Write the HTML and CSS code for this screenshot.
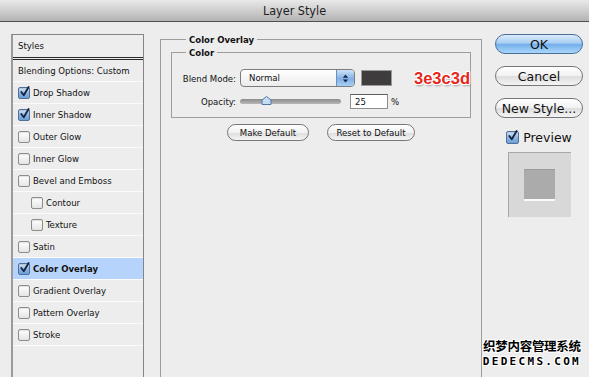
FILE: index.html
```html
<!DOCTYPE html>
<html lang="en">
<head>
  <meta charset="UTF-8" />
  <title>Layer Style</title>
  <link rel="stylesheet" href="styles.css">
</head>
<body>
  <div class="titlebar">Layer Style</div>

  <div class="dialog">
    <div class="styles-list">
      <div class="list-head">Styles</div>
      <div class="row row-blend">Blending Options: Custom</div>
      <div class="row"><span class="cb checked"><svg viewBox="0 0 12 12"><path d="M2.5 6 L5.2 9.6 L10.5 0.5"/></svg></span>Drop Shadow</div>
      <div class="row"><span class="cb checked"><svg viewBox="0 0 12 12"><path d="M2.5 6 L5.2 9.6 L10.5 0.5"/></svg></span>Inner Shadow</div>
      <div class="row"><span class="cb"></span>Outer Glow</div>
      <div class="row"><span class="cb"></span>Inner Glow</div>
      <div class="row"><span class="cb"></span>Bevel and Emboss</div>
      <div class="row sub"><span class="cb"></span>Contour</div>
      <div class="row sub"><span class="cb"></span>Texture</div>
      <div class="row"><span class="cb"></span>Satin</div>
      <div class="row selected"><span class="cb checked"><svg viewBox="0 0 12 12"><path d="M2.5 6 L5.2 9.6 L10.5 0.5"/></svg></span>Color Overlay</div>
      <div class="row"><span class="cb"></span>Gradient Overlay</div>
      <div class="row"><span class="cb"></span>Pattern Overlay</div>
      <div class="row"><span class="cb"></span>Stroke</div>
    </div>

    <div class="settings">
      <fieldset class="group outer">
        <legend>Color Overlay</legend>
        <fieldset class="group inner">
          <legend>Color</legend>
          <div class="field">
            <span class="label">Blend Mode:</span>
            <div class="select">
              <span class="select-value">Normal</span>
              <span class="select-arrows">
                <svg viewBox="0 0 8 12"><path d="M4 1.5 L7 5 H1 Z M4 10.5 L7 7 H1 Z"/></svg>
              </span>
            </div>
            <span class="swatch"></span>
            <span class="note">3e3c3d</span>
          </div>
          <div class="field">
            <span class="label">Opacity:</span>
            <div class="slider">
              <span class="track"></span>
              <svg class="thumb" viewBox="0 0 11 10"><path d="M1 9 V4.5 L5.5 1 L10 4.5 V9 Z"/></svg>
            </div>
            <span class="num">25</span>
            <span class="unit">%</span>
          </div>
        </fieldset>
        <div class="defaults">
          <span class="btn btn-make">Make Default</span>
          <span class="btn btn-reset">Reset to Default</span>
        </div>
      </fieldset>
    </div>

    <div class="actions">
      <span class="btn big primary">OK</span>
      <span class="btn big">Cancel</span>
      <span class="btn big">New Style...</span>
      <div class="preview-check"><span class="cb checked"><svg viewBox="0 0 12 12"><path d="M2.5 6 L5.2 9.6 L10.5 0.5"/></svg></span>Preview</div>
      <div class="preview-box"><span class="preview-square"></span></div>
    </div>
  </div>

  <div class="watermark">
    <div class="wm-cn">织梦内容管理系统</div>
    <div class="wm-en">DEDECMS.COM</div>
  </div>
</body>
</html>
```

FILE: styles.css
```css
html, body {
  margin: 0;
  padding: 0;
  height: 100%;
  overflow: hidden;
  background: #ededed;
  color: #111;
  font-family: "DejaVu Sans Condensed", "DejaVu Sans", sans-serif;
  font-size: 9.5px;
}
.titlebar {
  height: 21px;
  line-height: 22px;
  text-align: center;
  font-size: 12.5px;
  color: #1e1e1e;
  background: linear-gradient(#e9e9e9, #c9c9c9 60%, #b3b3b3);
  border-bottom: 1px solid #505050;
}
.dialog {
  display: flex;
  align-items: flex-start;
  padding-top: 12px;
}

/* left list */
.styles-list {
  margin-left: 11px;
  width: 130px;
  height: 360px;
  border: 1px solid #858585;
  border-left-width: 2px;
  border-left-color: #9a9a9a;
}
.list-head {
  height: 22px;
  line-height: 22px;
  padding-left: 5px;
  border-bottom: 3px double #2a2a2a;
}
.row {
  display: flex;
  align-items: center;
  gap: 3px;
  height: 21px;
  padding-left: 5px;
  border-bottom: 1px solid #fbfbfb;
}
.row-blend {
  padding-left: 5px;
}
.row.sub {
  padding-left: 18px;
}
.row.selected {
  background: #b6d4fb;
  font-weight: bold;
}
.cb {
  position: relative;
  box-sizing: border-box;
  width: 12px;
  height: 12px;
  flex: none;
  border: 1px solid #8d8d8d;
  border-radius: 2px;
  background: linear-gradient(#ffffff, #e4e4e4);
  box-shadow: inset 0 1px 1px rgba(0, 0, 0, 0.12);
}
.cb.checked {
  border-color: #4f6f98;
  background: linear-gradient(#d3e5f8, #8ab4e3 55%, #6c9fd8);
}
.cb svg {
  position: absolute;
  left: 0;
  top: -2px;
  width: 11px;
  height: 12px;
  overflow: visible;
}
.cb path {
  fill: none;
  stroke: #17233e;
  stroke-width: 2;
  stroke-linecap: round;
  stroke-linejoin: round;
}

/* middle settings */
.settings {
  margin-left: 16px;
  width: 314px;
}
.group {
  margin: 0;
  border: 1px solid #9d9d9d;
}
.group legend {
  font-weight: bold;
  padding: 0 3px;
  line-height: 11px;
}
.outer {
  height: 360px;
  padding: 2px 10px 0;
}
.outer > legend {
  margin-left: 15px;
}
.inner {
  padding: 11px 0 7px 2px;
}
.inner > legend {
  margin-left: 12px;
}
.field {
  display: flex;
  align-items: center;
  height: 18px;
}
.field + .field {
  margin-top: 5px;
}
.label {
  width: 62px;
  margin-right: 4px;
  text-align: right;
}
.select {
  display: flex;
  box-sizing: border-box;
  width: 115px;
  height: 18px;
  border: 1px solid #7c7c7c;
  border-radius: 4px;
  background: linear-gradient(#ffffff, #ececec);
  overflow: hidden;
}
.select-value {
  flex: 1;
  line-height: 16px;
  padding-left: 8px;
}
.select-arrows {
  display: flex;
  align-items: center;
  justify-content: center;
  width: 17px;
  border-left: 1px solid #6f8fb8;
  background: linear-gradient(#cfe3f8, #7fb0e6 55%, #a9cff5);
}
.select-arrows svg {
  width: 7px;
  height: 11px;
}
.select-arrows path {
  fill: #1b2540;
}
.swatch {
  width: 31px;
  height: 16px;
  margin-left: 6px;
  background: #3e3c3d;
  border: 1px solid #9a9a9a;
  box-sizing: border-box;
}
.note {
  margin-left: 22px;
  font-family: "Liberation Sans", Arial, sans-serif;
  font-weight: bold;
  font-size: 16.5px;
  color: #e5271d;
  text-shadow: 1px 1px 0 #fff, -1px -1px 0 #fff, 1px -1px 0 #fff, -1px 1px 0 #fff,
    0 1px 0 #fff, 0 -1px 0 #fff, 1px 0 0 #fff, -1px 0 0 #fff, 1px 2px 2px rgba(0, 0, 0, 0.35);
}
.slider {
  position: relative;
  display: flex;
  align-items: center;
  width: 101px;
  height: 14px;
}
.track {
  width: 100%;
  height: 5px;
  border-radius: 3px;
  background: linear-gradient(#8a8a8a, #b9b9b9);
}
.thumb {
  position: absolute;
  left: 21px;
  top: 1px;
  width: 11px;
  height: 11px;
}
.thumb path {
  fill: #c4dcf4;
  stroke: #51759f;
  stroke-width: 1;
}
.num {
  box-sizing: border-box;
  width: 38px;
  height: 15px;
  margin-left: 9px;
  padding-left: 4px;
  line-height: 13px;
  background: #fff;
  border: 1px solid #8e8e8e;
  border-top-color: #5f5f5f;
}
.unit {
  margin-left: 3px;
}
.defaults {
  display: flex;
  justify-content: center;
  gap: 18px;
  margin-top: 6px;
}
.btn {
  display: flex;
  align-items: center;
  justify-content: center;
  box-sizing: border-box;
  height: 17px;
  border: 1px solid #767676;
  border-radius: 9px;
  background: linear-gradient(#ffffff, #f1f1f1 50%, #dedede 51%, #f4f4f4);
}
.btn-make {
  width: 82px;
}
.btn-reset {
  width: 88px;
}

/* right column */
.actions {
  display: flex;
  flex-direction: column;
  align-items: center;
  gap: 12px;
  width: 88px;
  margin-left: 21px;
}
.btn.big {
  width: 88px;
  height: 20px;
  border-radius: 10px;
  font-family: "DejaVu Sans", sans-serif;
  font-size: 12.5px;
}
.btn.primary {
  border-color: #4c6d96;
  background: linear-gradient(#dcecfb, #a6cdf3 45%, #74b0ec 52%, #a9d6fb);
}
.preview-check {
  display: flex;
  align-items: center;
  gap: 4px;
  margin-top: 0;
  font-family: "DejaVu Sans", sans-serif;
  font-size: 12.5px;
}
.preview-check .cb {
  width: 13px;
  height: 13px;
}
.preview-box {
  display: flex;
  align-items: center;
  justify-content: center;
  box-sizing: border-box;
  width: 63px;
  height: 65px;
  margin-top: -5px;
  background: #d8d8d8;
  border-top: 1px solid #a8a8a8;
  border-left: 1px solid #a8a8a8;
}
.preview-square {
  box-sizing: border-box;
  width: 31px;
  height: 32px;
  background: #ababab;
  border-top: 1px solid #9a9a9a;
  border-bottom: 2px solid #fafafa;
}

/* watermark overlay */
.watermark {
  position: absolute;
  right: 8px;
  bottom: 7px;
  text-align: center;
  color: #000;
  font-weight: bold;
  text-shadow: 1px 1px 0 #fff, -1px -1px 0 #fff, 1px -1px 0 #fff, -1px 1px 0 #fff;
}
.wm-cn {
  font-family: "Noto Sans CJK SC", sans-serif;
  font-size: 12.5px;
  line-height: 16px;
  letter-spacing: -0.3px;
}
.wm-en {
  font-family: "DejaVu Sans Mono", monospace;
  font-size: 11px;
  letter-spacing: 2.3px;
  line-height: 16px;
}
```
